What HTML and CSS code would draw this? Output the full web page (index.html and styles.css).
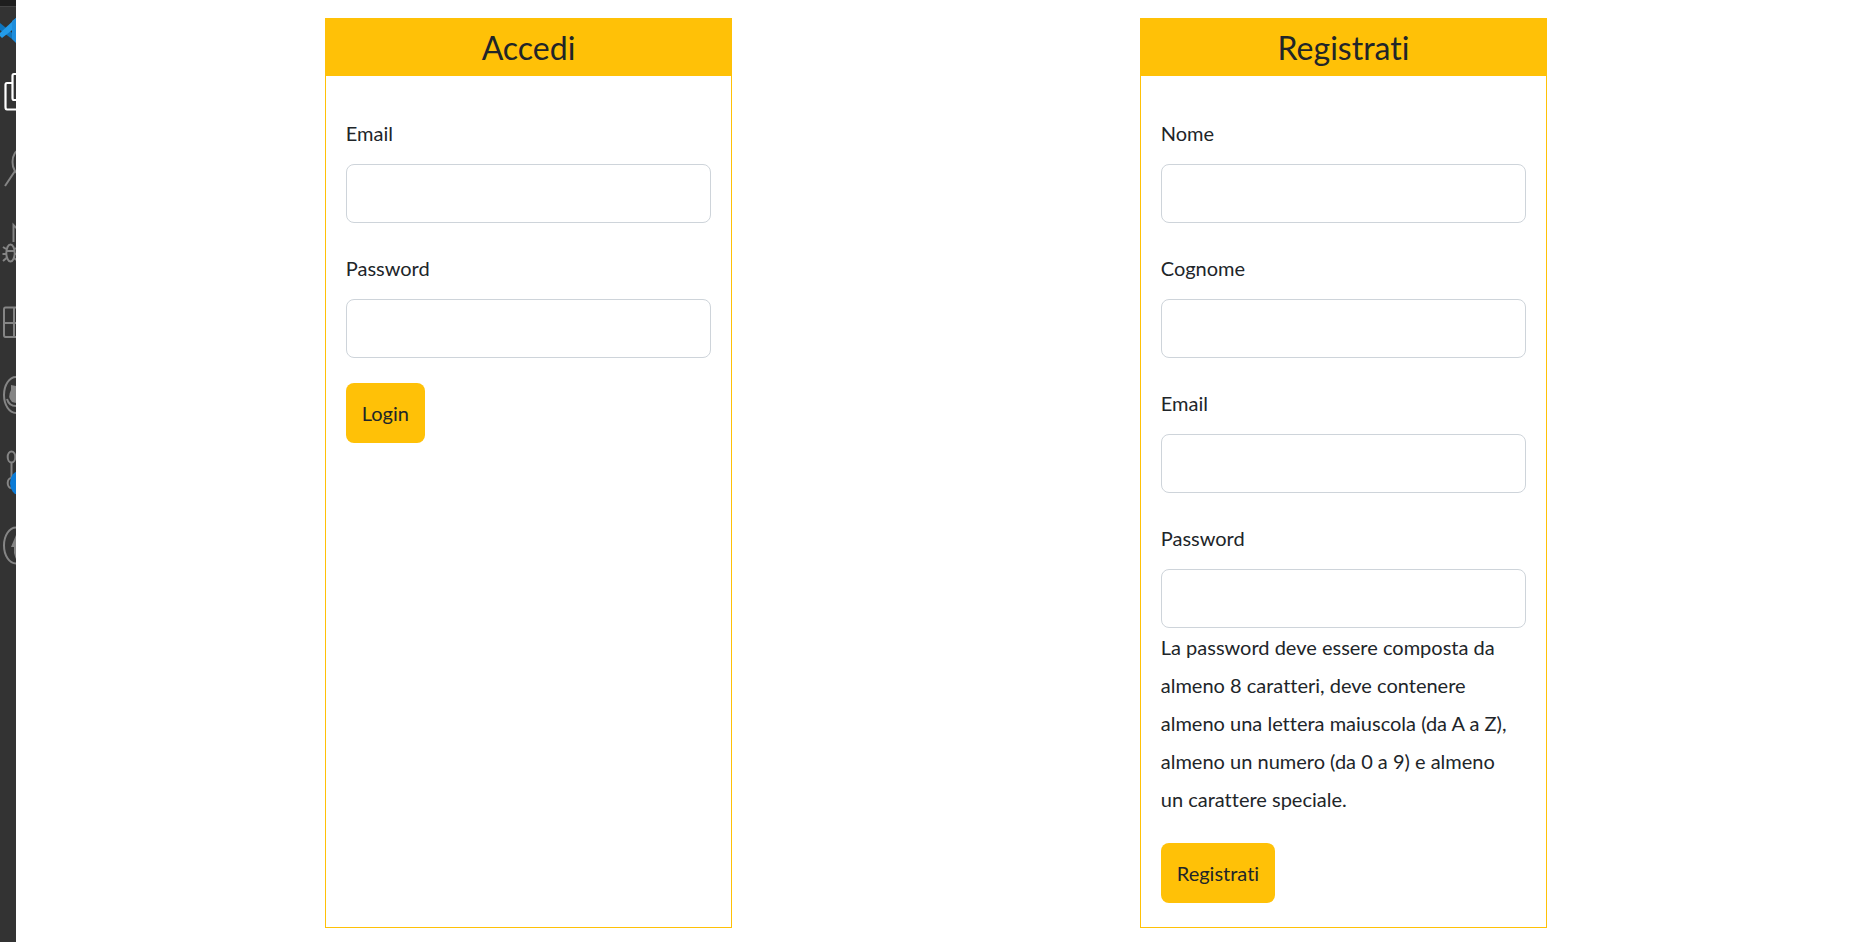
FILE: index.html
```html
<!DOCTYPE html>
<html lang="it">
<head>
<meta charset="utf-8">
<title>Accedi o registrati</title>
<meta name="viewport" content="width=device-width, initial-scale=1">
<link rel="stylesheet" href="styles.css">
</head>
<body>
<div class="app">
  <aside class="activity-bar" aria-hidden="true">
    <div class="title-strip"></div>
    <svg class="icon icon-logo" viewBox="0 7 16 48"><path d="M0 23 16 36V42L0 30Z" fill="#0e75bd"/><path d="M0 33 16 18V27L2 38 0 36Z" fill="#239be9"/><path d="M12 21 16 18V43L12 39Z" fill="#1f8ddb"/></svg>
    <svg class="icon" viewBox="0 55 16 75"><path d="M22 74H14Q12.500 74 12.500 76V98Q12.500 100 14 100H22M12 83H7Q5.500 83 5.500 85V107Q5.500 109.500 7 109.500H22" stroke="#fff" stroke-width="2.200"/></svg>
    <svg class="icon" viewBox="0 130 16 75"><ellipse cx="20" cy="162" rx="7.500" ry="12"/><path d="M15 171 5 186"/></svg>
    <svg class="icon" viewBox="0 205 16 75"><path d="M13.500 242V225L24 236"/><ellipse cx="10.500" cy="253" rx="4.200" ry="8.500"/><path d="M6 251H15M3 247 6 249M2.500 254H6M3 261 6.500 258M15 249 18 247M15 254H18M14 258 18 261"/></svg>
    <svg class="icon" viewBox="0 280 16 75"><path d="M22 307.500H5.500Q4 307.500 4 309.500V335Q4 337 5.500 337H22M4 323H22M14 308V337"/></svg>
    <svg class="icon" viewBox="0 355 16 75"><ellipse cx="16" cy="395" rx="12" ry="18"/><path d="M16 386 11 385V390Q7 397 12 402L16 403Z" fill="#858585" stroke="none"/><path d="M7 399Q9 406 16 406"/></svg>
    <svg class="icon" viewBox="0 430 16 75"><ellipse cx="11.500" cy="457" rx="3.800" ry="5.500"/><path d="M11.500 462V478"/><ellipse cx="11.500" cy="483" rx="3.800" ry="5"/><ellipse cx="19" cy="483" rx="9" ry="12" fill="#0c7bd6" stroke="none"/></svg>
    <svg class="icon" viewBox="0 505 16 75"><ellipse cx="16" cy="545.500" rx="12" ry="18"/><path d="M16 535 11 547H14V553Q15 557 16 559Z" fill="#858585" stroke="none"/></svg>
  </aside>

  <main class="forms">
    <section class="card">
      <h1 class="card-title">Accedi</h1>
      <form class="card-body">
        <div class="field">
          <label class="label" for="login-email">Email</label>
          <input class="input" id="login-email" type="email">
        </div>
        <div class="field">
          <label class="label" for="login-password">Password</label>
          <input class="input" id="login-password" type="password">
        </div>
        <button class="button" type="button">Login</button>
      </form>
    </section>

    <section class="card">
      <h1 class="card-title">Registrati</h1>
      <form class="card-body">
        <div class="field">
          <label class="label" for="nome">Nome</label>
          <input class="input" id="nome" type="text">
        </div>
        <div class="field">
          <label class="label" for="cognome">Cognome</label>
          <input class="input" id="cognome" type="text">
        </div>
        <div class="field">
          <label class="label" for="email">Email</label>
          <input class="input" id="email" type="email">
        </div>
        <div class="field">
          <label class="label" for="password">Password</label>
          <input class="input" id="password" type="password" aria-describedby="password-help">
          <p class="help" id="password-help">La password deve essere composta da almeno 8 caratteri, deve contenere almeno una lettera maiuscola (da A a Z), almeno un numero (da 0 a 9) e almeno un carattere speciale.</p>
        </div>
        <button class="button" type="button">Registrati</button>
      </form>
    </section>
  </main>
</div>
</body>
</html>
```
FILE: styles.css
```css
* {
  box-sizing: border-box;
}

body {
  margin: 0;
  background: #fff;
  color: #212529;
  font: 20px/38px Lato, "Noto Sans", sans-serif;
  font-variant-ligatures: none;
}

.app {
  display: flex;
  min-height: 100vh;
}

.activity-bar {
  display: flex;
  flex: none;
  flex-direction: column;
  width: 16px;
  background: #333;
}

.title-strip {
  height: 7px;
  background: #1e1e1e;
  border-bottom: 1px solid #444;
}

.icon {
  display: block;
  flex: none;
  width: 16px;
  height: 75px;
  fill: none;
  stroke: #858585;
  stroke-width: 2;
}

.icon-logo {
  height: 48px;
  stroke: none;
}

.forms {
  display: flex;
  flex: 1;
  justify-content: space-around;
  align-items: stretch;
  padding: 18px 102px 14px 105px;
}

.card {
  width: 25%;
  border: 1px solid #ffc107;
}

.card-title {
  margin: 0;
  background: #ffc107;
  font-size: 32px;
  font-weight: 400;
  line-height: 57px;
  text-align: center;
}

.card-body {
  display: flex;
  flex-direction: column;
  align-items: flex-start;
  gap: 25px;
  padding: 37px 20px 24px;
}

.field {
  width: 100%;
}

.label {
  display: block;
  margin-bottom: 11px;
  line-height: 40px;
}

.input {
  display: block;
  width: 100%;
  height: 59px;
  padding: 0 16px;
  border: 1px solid #ced4da;
  border-radius: 8px;
  background: #fff;
  color: inherit;
  font: inherit;
}

.help {
  margin: 0;
  padding-right: 10px;
}

.button {
  height: 60px;
  padding: 0 16px;
  border: 0;
  border-radius: 8px;
  background: #ffc107;
  color: #212529;
  font: inherit;
  font-variant-ligatures: none;
}
```
